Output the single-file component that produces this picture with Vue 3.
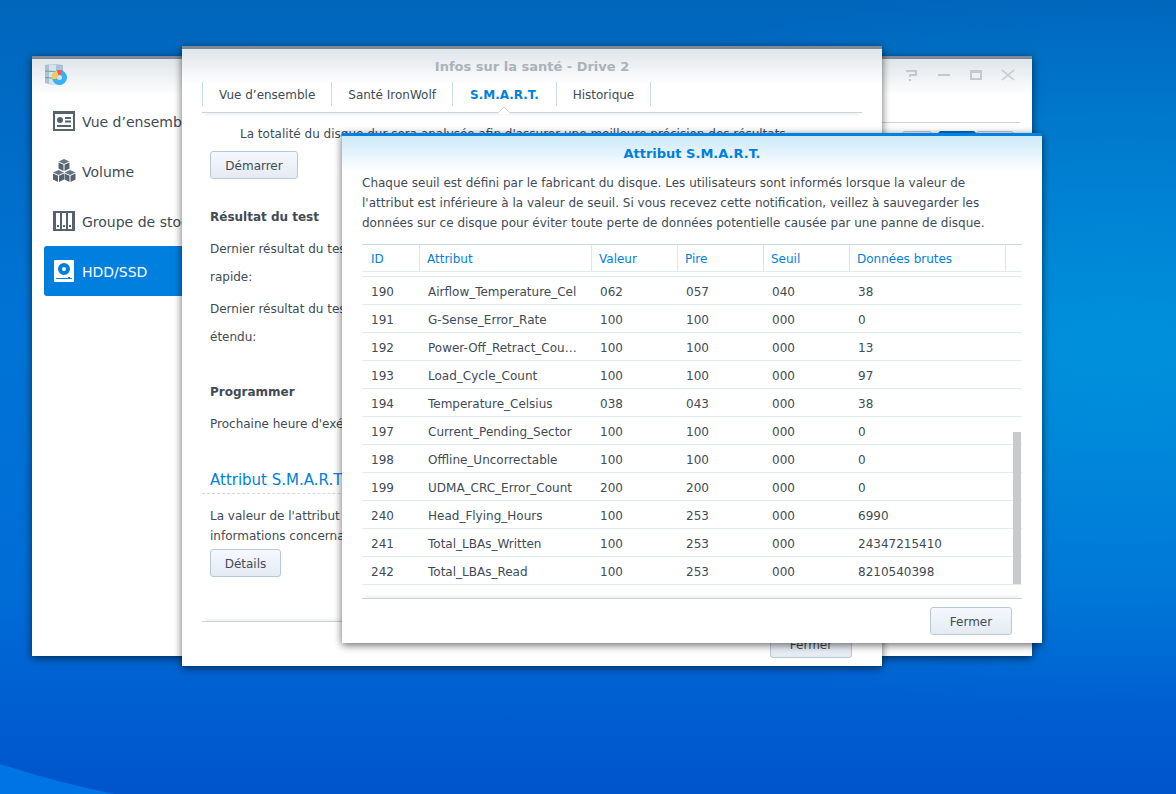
<template>
  <div class="desktop">
    <svg class="wave" viewBox="0 0 120 30" aria-hidden="true">
      <path d="M0 0Q56 18 114 30H0Z" fill="#0074e4" />
    </svg>

    <!-- storage manager -->
    <section class="window manager">
      <header class="manager-bar">
        <svg class="logo" width="24" height="24" viewBox="0 0 24 24" aria-hidden="true">
          <path d="M1 2Q9 0 19 2V20Q9 23 1 20Z" fill="#a9c3d3" />
          <path d="M5 1.500H12V21.500H5Z" fill="#d5e4ec" />
          <path d="M1 8Q9 9 19 8M1 14.500Q9 16 19 14.500" fill="none" stroke="#7895a7" />
          <circle cx="15.500" cy="14.500" r="5" fill="#d5e4ec" stroke="#35b2f2" stroke-width="5" />
          <path d="M8 16A7.500 7.500 0 0 1 13 7.500L14.500 12Q12.500 13 12.500 16Z" fill="#ffc94f" />
          <path d="M13 7.400A7.500 7.500 0 0 1 18.500 7.600L17 12Q15.500 11.300 14.500 12Z" fill="#f2556b" />
        </svg>
        <div class="controls">
          <button v-for="c in controls" :key="c.name" type="button" :aria-label="c.name">
            <svg width="14" height="12" viewBox="0 0 14 12">
              <path :d="c.path" fill="none" stroke="#c3c9cd" :stroke-width="c.width" />
            </svg>
          </button>
        </div>
      </header>
      <div class="manager-body">
        <nav class="sidebar">
          <a v-for="item in menu" :key="item.label" href="#" :class="{ active: item.active }">
            <svg v-if="item.icon === 'overview'" width="24" height="24" viewBox="0 0 24 24">
              <path d="M1 2H23V22H1ZM3 5V20H21V5Z" fill="#56636f" fill-rule="evenodd" />
              <circle cx="8" cy="11" r="3" fill="#56636f" />
              <path d="M13 9H19M13 12.500H19M5 17H19" stroke="#56636f" stroke-width="2" />
            </svg>
            <svg v-else-if="item.icon === 'volume'" width="24" height="24" viewBox="0 0 24 24">
              <g v-for="p in cubes" :key="p" :transform="p">
                <path d="M0 2.500L5.500 0L11 2.500L5.500 5Z" fill="#68747e" />
                <path d="M0 3.500L5 5.800V12L0 9.500ZM11 3.500L6 5.800V12L11 9.500Z" fill="#56636f" />
              </g>
            </svg>
            <svg v-else-if="item.icon === 'pool'" width="24" height="24" viewBox="0 0 24 24">
              <path d="M1 2H23V22H1ZM4 4V20H8V4ZM10 4V20H14V4ZM16 4V20H20V4Z" fill="#56636f" fill-rule="evenodd" />
              <path d="M5 17H7M11 17H13M17 17H19" stroke="#56636f" stroke-width="2" />
            </svg>
            <svg v-else width="24" height="24" viewBox="0 0 24 24">
              <rect x="2" y="1" width="20" height="22" rx="1" fill="#fff" />
              <circle cx="12" cy="10" r="4" fill="none" stroke="#007fde" stroke-width="4" />
              <path d="M4 19.500H20" stroke="#007fde" />
              <path d="M16 19H18" stroke="#007fde" stroke-width="2" />
            </svg>
            <span>{{ item.label }}</span>
          </a>
        </nav>
        <div class="toolbar">
          <button class="tool" type="button" aria-label="Liste"></button>
          <div class="switch">
            <button class="on" type="button" aria-label="HDD"></button>
            <button type="button" aria-label="SSD"></button>
          </div>
        </div>
      </div>
    </section>

    <!-- drive health -->
    <section class="window health">
      <h2 class="title">Infos sur la santé - Drive 2</h2>
      <nav class="tabs">
        <a v-for="tab in tabs" :key="tab" href="#" :class="{ current: tab === 'S.M.A.R.T.' }">
          {{ tab }}
          <svg v-if="tab === 'S.M.A.R.T.'" class="caret" width="14" height="8" viewBox="0 0 14 8">
            <path d="M0 8V7L7 1L14 7V8Z" fill="#fff" />
            <path d="M0 7H1L7 1L13 7H14" fill="none" stroke="#cfd3d6" />
          </svg>
        </a>
      </nav>
      <div class="health-body">
        <p class="note">La totalité du disque dur sera analysée afin d'assurer une meilleure précision des résultats.</p>
        <button class="btn start" type="button">Démarrer</button>
        <h3>Résultat du test</h3>
        <p class="label">Dernier résultat du test rapide:</p>
        <p class="label">Dernier résultat du test étendu:</p>
        <h3 class="plan">Programmer</h3>
        <p class="label next">Prochaine heure d'exécution:</p>
        <h4>Attribut S.M.A.R.T.</h4>
        <p class="desc">La valeur de l'attribut S.M.A.R.T.<br />informations concernant</p>
        <button class="btn details" type="button">Détails</button>
      </div>
      <footer class="foot">
        <button class="btn close" type="button">Fermer</button>
      </footer>
    </section>

    <!-- attribute list -->
    <section class="window attributes">
      <h2 class="title">Attribut S.M.A.R.T.</h2>
      <p class="intro">
        Chaque seuil est défini par le fabricant du disque. Les utilisateurs sont informés lorsque la valeur de
        l'attribut est inférieure à la valeur de seuil. Si vous recevez cette notification, veillez à sauvegarder les
        données sur ce disque pour éviter toute perte de données potentielle causée par une panne de disque.
      </p>
      <div class="grid">
        <table>
          <colgroup>
            <col class="c-id" />
            <col class="c-name" />
            <col v-for="n in 3" :key="n" class="c-num" />
            <col class="c-raw" />
            <col />
          </colgroup>
          <thead>
            <tr>
              <th v-for="h in heads" :key="h" scope="col">{{ h }}</th>
              <td></td>
            </tr>
          </thead>
          <tbody>
            <tr class="gap" aria-hidden="true"><td colspan="7"></td></tr>
            <tr v-for="row in rows" :key="row[0]">
              <td v-for="(cell, i) in row" :key="i">{{ cell }}</td>
              <td></td>
            </tr>
          </tbody>
        </table>
        <div class="scrollbar"></div>
      </div>
      <footer class="foot">
        <button class="btn close" type="button">Fermer</button>
      </footer>
    </section>
  </div>
</template>

<script setup>
const controls = [
  { name: 'Aide', path: 'M1 2H11V6H5V8M5 10V12', width: 2 },
  { name: 'Réduire', path: 'M1 6H13', width: 2 },
  { name: 'Agrandir', path: 'M1 2H13M1 3H13M2 3V10H12V3', width: 2 },
  { name: 'Fermer la fenêtre', path: 'M1 1L13 11M13 1L1 11', width: 1.5 },
];

const menu = [
  { icon: 'overview', label: 'Vue d’ensemble' },
  { icon: 'volume', label: 'Volume' },
  { icon: 'pool', label: 'Groupe de stockage' },
  { icon: 'disk', label: 'HDD/SSD', active: true },
];

const cubes = ['translate(6.5 0)', 'translate(1 11)', 'translate(12.5 11)'];

const tabs = ['Vue d’ensemble', 'Santé IronWolf', 'S.M.A.R.T.', 'Historique'];

const heads = ['ID', 'Attribut', 'Valeur', 'Pire', 'Seuil', 'Données brutes'];

const rows = [
  ['190', 'Airflow_Temperature_Cel', '062', '057', '040', '38'],
  ['191', 'G-Sense_Error_Rate', '100', '100', '000', '0'],
  ['192', 'Power-Off_Retract_Cou…', '100', '100', '000', '13'],
  ['193', 'Load_Cycle_Count', '100', '100', '000', '97'],
  ['194', 'Temperature_Celsius', '038', '043', '000', '38'],
  ['197', 'Current_Pending_Sector', '100', '100', '000', '0'],
  ['198', 'Offline_Uncorrectable', '100', '100', '000', '0'],
  ['199', 'UDMA_CRC_Error_Count', '200', '200', '000', '0'],
  ['240', 'Head_Flying_Hours', '100', '253', '000', '6990'],
  ['241', 'Total_LBAs_Written', '100', '253', '000', '24347215410'],
  ['242', 'Total_LBAs_Read', '100', '253', '000', '8210540398'],
];
</script>

<style>
body {
  margin: 0;
}
</style>

<style scoped>
.desktop {
  position: relative;
  min-height: 100vh;
  overflow: hidden;
  background:
    radial-gradient(ellipse 70% 45% at 95% 44%, rgba(0, 152, 220, 0.8), rgba(0, 152, 220, 0)),
    linear-gradient(#0066bc 0%, #0074d6 42%, #006cd6 75%, #0054cc 100%);
  font-family: Verdana, "DejaVu Sans", sans-serif;
  font-size: 12px;
  line-height: 20px;
  color: #414b55;
}

.desktop * {
  box-sizing: border-box;
}

h2, h3, h4, p {
  margin: 0;
}

a {
  color: inherit;
  text-decoration: none;
}

button {
  font: inherit;
  color: inherit;
  padding: 0;
}

.wave {
  position: absolute;
  left: 0;
  bottom: 0;
  width: 120px;
  height: 30px;
}

.window {
  position: absolute;
  background: #fff linear-gradient(#dfe5ea, #fff) no-repeat 0 0 / 100% 36px;
  border-top: 3px solid #7e8a95;
  box-shadow: 0 2px 8px rgba(0, 0, 0, 0.6);
}

.manager {
  left: 32px;
  right: 144px;
  top: 56px;
  min-height: 600px;
}

.health {
  left: 182px;
  right: 294px;
  top: 46px;
  padding: 0 20px 8px;
}

.attributes {
  left: 342px;
  right: 134px;
  top: 133px;
  padding: 0 20px 8px;
  background-image: linear-gradient(#cde8f9, #fff);
  border-top-color: #0080e0;
}

.manager-bar {
  display: flex;
  justify-content: space-between;
  padding: 4px 16px 0 12px;
  height: 37px;
}

.controls {
  display: flex;
  gap: 16px;
  align-items: center;
  height: 24px;

  button {
    display: flex;
    justify-content: center;
    width: 16px;
    border: 0;
    background: none;
  }
}

.manager-body {
  display: flex;
}

.sidebar {
  width: 200px;
  padding-left: 12px;

  a {
    display: flex;
    align-items: center;
    gap: 6px;
    height: 50px;
    padding-left: 8px;
    border-radius: 3px;
    font-size: 14px;
    white-space: nowrap;
    overflow: hidden;
  }

  span {
    padding-top: 2px;
  }

  .active {
    background: #007fde;
    color: #fff;
  }
}

.toolbar {
  flex: 1;
  display: flex;
  justify-content: flex-end;
  gap: 6px;
  margin: 26px 12px 0 12px;
  padding: 8px 6px 0 0;
  border-top: 1px solid #cfd3d6;

  button {
    width: 38px;
    height: 28px;
    border: 1px solid #b9c8d5;
    border-radius: 3px;
    background: #eef4fa;
  }

  .tool {
    width: 30px;
  }

  .on {
    background: #0072c8;
    border-color: #0068b8;
  }
}

.switch {
  display: flex;
}

.title {
  height: 33px;
  padding-top: 8px;
  font-size: 13px;
  font-weight: bold;
  text-align: center;
  color: #aab2ba;
}

.attributes .title {
  color: #007fde;
  height: 37px;
}

.tabs {
  display: flex;
  height: 31px;
  border-bottom: 1px solid #cfd3d6;
  box-shadow: 0 4px 2px -2px #f1f2f3;

  a {
    position: relative;
    height: 24px;
    padding: 3px 16px 0;
    border-right: 1px solid #cadbe8;
  }

  a:first-child {
    border-left: 1px solid #cadbe8;
  }

  .current {
    padding: 3px 17px 0;
    color: #007fde;
    font-weight: bold;
  }

  .caret {
    position: absolute;
    left: calc(50% - 7px);
    bottom: -8px;
  }
}

.health-body {
  padding: 11px 8px 0;

  h3 {
    padding-top: 28px;
    margin-bottom: 8px;
    font-size: 12px;
    font-weight: bold;
  }

  .plan {
    padding-top: 27px;
  }

  h4 {
    margin: 32px -8px 0;
    padding: 0 8px 3px;
    border-bottom: 1px dashed #d6dadd;
    font-size: 15px;
    font-weight: normal;
    color: #007fde;
  }
}

.note {
  padding-left: 30px;
  white-space: nowrap;
}

.label {
  width: 180px;
  margin-bottom: 4px;
  line-height: 28px;
}

.next {
  white-space: nowrap;
}

.desc {
  padding-top: 12px;
}

.btn {
  display: block;
  height: 28px;
  padding-top: 2px;
  border: 1px solid #b9c8d5;
  border-radius: 3px;
  background: linear-gradient(#f5f9ff, #e5ebf2);
}

.start {
  width: 88px;
  margin-top: 7px;
}

.details {
  width: 71px;
  margin-top: 3px;
}

.foot {
  display: flex;
  justify-content: flex-end;
  margin-top: 13px;
  padding: 8px 10px 0;
  border-top: 1px solid #cfd3d6;
  box-shadow: 0 -4px 2px -2px #f1f2f3;
}

.health .foot {
  margin-top: 44px;
}

.close {
  width: 82px;
}

.intro {
  padding: 0 20px 11px 0;
}

.grid {
  position: relative;
}

table {
  width: 100%;
  table-layout: fixed;
  border-collapse: separate;
  border-spacing: 0;
}

.c-id {
  width: 58px;
}

.c-name {
  width: 172px;
}

.c-num {
  width: 86px;
}

.c-raw {
  width: 156px;
}

th, td {
  height: 28px;
  padding: 3px 8px 0;
  line-height: 20px;
  text-align: left;
  white-space: nowrap;
  overflow: hidden;
  text-overflow: ellipsis;
  border-bottom: 1px solid #e3ebf1;
}

thead th, thead td {
  padding: 2px 7px 0;
  border-top: 1px solid #c7d9e6;
}

th {
  font-weight: normal;
  color: #007fde;
  border-right: 1px solid #dbe7ef;
}

tr > :first-child {
  padding-left: 9px;
}

.gap td {
  height: 5px;
  padding: 0;
  line-height: 0;
}

.scrollbar {
  position: absolute;
  right: 1px;
  bottom: 1px;
  width: 8px;
  height: 152px;
  background: #c8cacc;
}
</style>
